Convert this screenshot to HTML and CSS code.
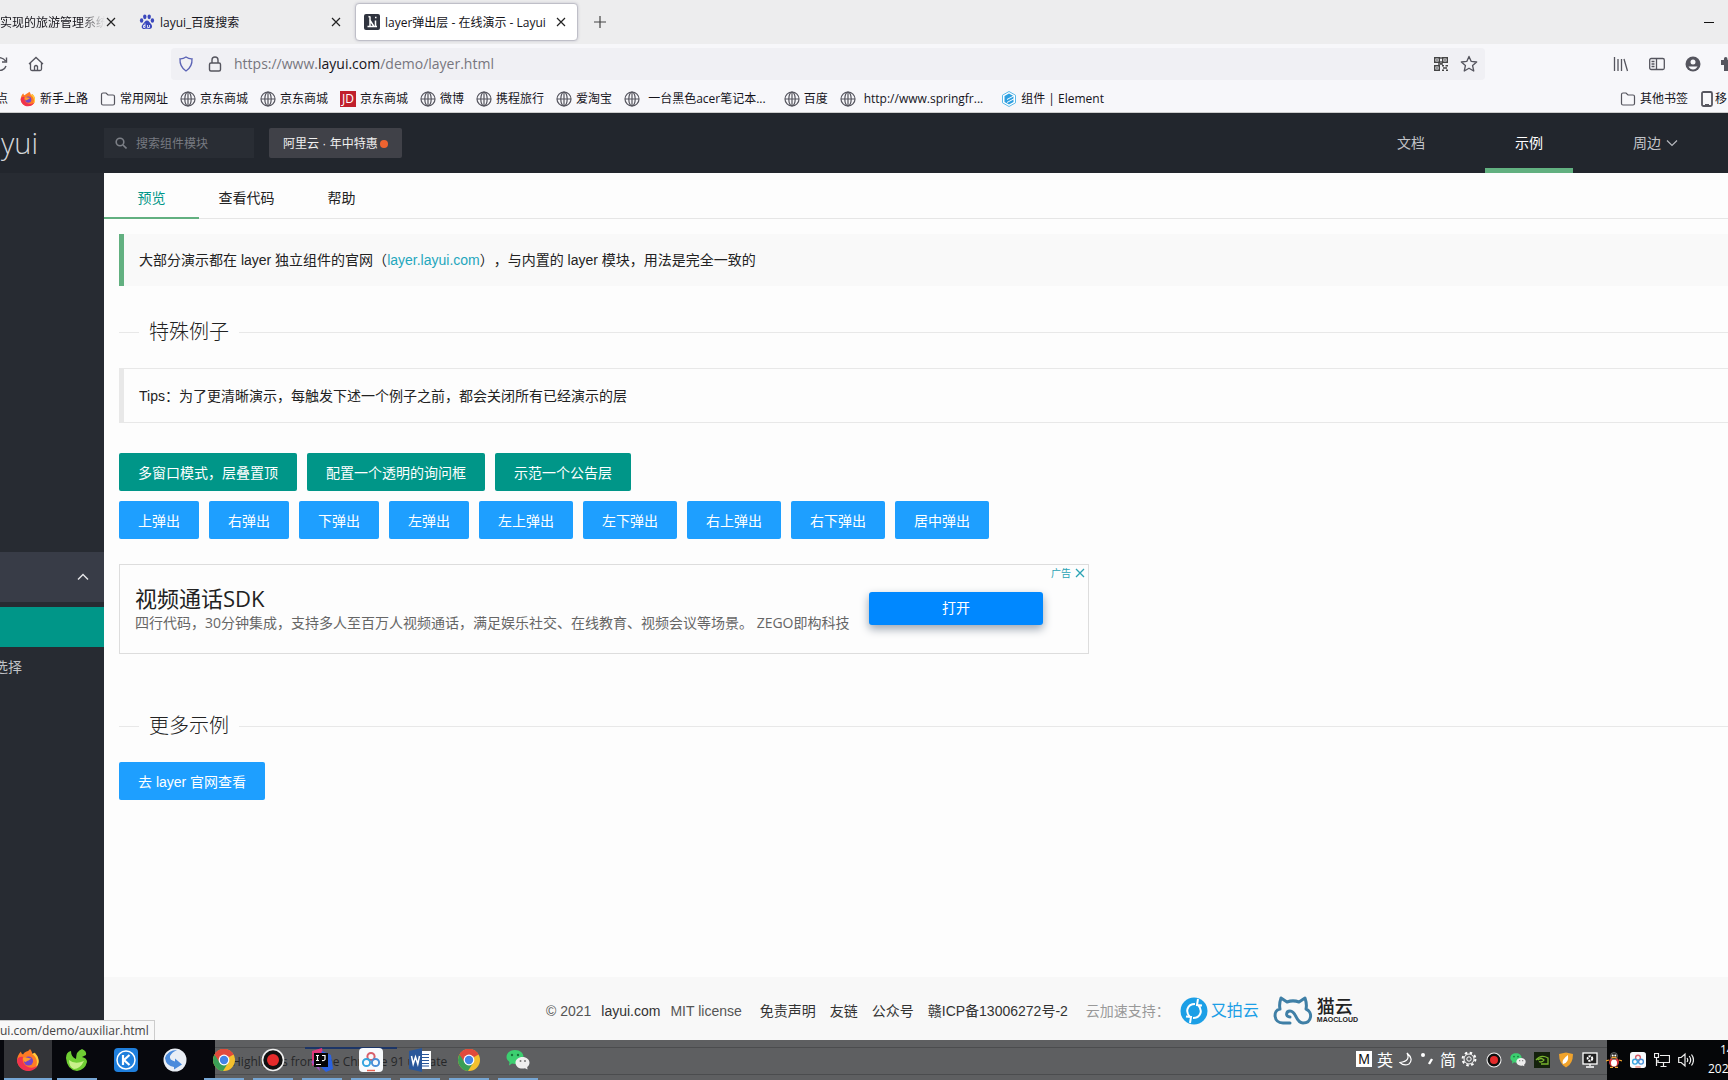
FILE: index.html
```html
<!DOCTYPE html>
<html lang="zh-CN">
<head>
<meta charset="utf-8">
<title>layer弹出层 - 在线演示 - Layui</title>
<link rel="stylesheet" href="styles.css">
</head>
<body>
<svg class="defs" aria-hidden="true">
  <symbol id="globe" viewBox="0 0 16 16"><g fill="none" stroke="#55555e" stroke-width="1.2"><circle cx="8" cy="8" r="7"/><ellipse cx="8" cy="8" rx="3.2" ry="7"/><path d="M1 8h14M8 1v14"/></g></symbol>
  <symbol id="folder" viewBox="0 0 16 16"><path d="M1.5 12.500V3.500q0-1.500 1.500-1.500h3l2 2h5q1.500 0 1.500 1.500v7q0 1.500-1.500 1.500h-10q-1.500 0-1.500-1.500z" fill="none" stroke="#55555e" stroke-width="1.200"/></symbol>
  <symbol id="close" viewBox="0 0 10 10"><path d="M1 1l8 8M9 1l-8 8" stroke="#222" stroke-width="1.200"/></symbol>
  <symbol id="firefox" viewBox="0 0 24 24"><path d="M14 1c2 2 2 4 2.500 5 1.500-.5 2-1.500 2-1.500 3 3 4.500 5.500 4 10A11 11 0 0 1 1 13C1 9 2.500 6 5 3.500 5 5 6 6 7 6.500 9 3 12 4 14 1z" fill="#ff7b24"/><path d="M16 6c6 4 6 10 3 14 3-1 4-6 3.500-8-.5-4-3-6-4-7z" fill="#ffcf3d"/><path d="M1 13c1 6 6 10 11 10 4 0 8-2 10-6-4 4-10 3-13 0-2-2-3-5-2-8-3-1-6 1-6 4z" fill="#f0324f"/><circle cx="12.500" cy="13" r="4.600" fill="#7545c8"/><path d="M7 10c3-2 5 1 8 0-1 3-4 2-5 4-2 0-3-2-3-4z" fill="#ff9a2b"/></symbol>
  <symbol id="chrome" viewBox="0 0 24 24"><circle cx="12" cy="12" r="11" fill="#f4c02e"/><path d="M12 12L2.500 6.500A11 11 0 0 1 21.500 6.500z" fill="#e04a3c"/><path d="M12 12L2.500 6.500A11 11 0 0 0 11 23l5-8z" fill="#3a9e56"/><path d="M12 7h9.700A11 11 0 0 0 12 1 11 11 0 0 0 2.500 6.500L7.500 14z" fill="#e04a3c"/><circle cx="12" cy="12" r="5.400" fill="#fff"/><circle cx="12" cy="12" r="4.200" fill="#4384e6"/></symbol>
  <symbol id="wechat" viewBox="0 0 24 24"><path d="M9 2c5 0 8.500 3 8.500 7s-3.500 7-8.500 7l-3-.5L3 17.500 3.500 14C1.500 12.500.5 11 .5 9c0-4 3.500-7 8.500-7z" fill="#3ccf70"/><circle cx="6" cy="7" r="1.200" fill="#17743a"/><circle cx="12" cy="7" r="1.200" fill="#17743a"/><path d="M16.500 9c4 0 7 2.500 7 5.700 0 1.800-1 3.300-2.300 4.300l.3 2.500-2.500-1.300c-5 1.500-9.500-1.500-9.500-5.500 0-3.200 3-5.700 7-5.700z" fill="#eee"/><circle cx="14.500" cy="13" r="1" fill="#777"/><circle cx="19" cy="13" r="1" fill="#777"/></symbol>
  <symbol id="record" viewBox="0 0 24 24"><circle cx="12" cy="12" r="10.500" fill="#111" stroke="#eee" stroke-width="1.600"/><circle cx="12" cy="12" r="6" fill="#e52b2b"/></symbol>
  <symbol id="pan" viewBox="0 0 24 24"><rect width="24" height="24" rx="4" fill="#f7fafd"/><g fill="none" stroke-width="2"><circle cx="12" cy="8.500" r="3.600" stroke="#d8606c"/><circle cx="7.500" cy="14.500" r="3.600" stroke="#35a5e0"/><circle cx="16.500" cy="14.500" r="3.600" stroke="#4a90d8"/></g><path d="M8 22.500h8" stroke="#e86050" stroke-width="1.500"/></symbol>
</svg>

<div class="browser">
  <div class="tabstrip">
    <div class="tab tab-first"><span class="tab-title tab-fade">实现的旅游管理系统</span><button class="icon-btn" aria-label="关闭标签页"><svg width="10" height="10"><use href="#close"/></svg></button></div>
    <div class="tab tab-second">
      <svg width="16" height="16" viewBox="0 0 16 16" fill="#3b48bd"><ellipse cx="2.600" cy="6.500" rx="1.700" ry="2.200"/><ellipse cx="5.800" cy="2.800" rx="1.700" ry="2.400"/><ellipse cx="10.200" cy="2.800" rx="1.700" ry="2.400"/><ellipse cx="13.400" cy="6.500" rx="1.700" ry="2.200"/><path d="M8 6.500c2 0 2.500 2 4 3.500 2 2 1 5-1.500 5-1.500 0-3.500-.3-5 0C3 15.500 1.500 12.500 4 10c1.500-1.500 2-3.500 4-3.500z"/><path d="M6 9.500v4M6 11.500h-1.500v2H6M8.500 11v2.500H10.500V11" stroke="#fff" fill="none" stroke-width=".8"/></svg>
      <span class="tab-title">layui_百度搜索</span><button class="icon-btn" aria-label="关闭标签页"><svg width="10" height="10"><use href="#close"/></svg></button></div>
    <div class="tab tab-active">
      <svg width="16" height="16" viewBox="0 0 16 16"><rect width="16" height="16" rx="2" fill="#30343f"/><path d="M4.500 2.500L6 3v9.500H3.500M5.500 5.500l4.500 7H5M11.500 6.500v6h1.500" stroke="#fff" stroke-width="1.500" fill="none"/><path d="M11 3.500h1.500" stroke="#fff" stroke-width="1.500"/></svg>
      <span class="tab-title">layer弹出层 - 在线演示 - Layui</span><button class="icon-btn" aria-label="关闭标签页"><svg width="10" height="10"><use href="#close"/></svg></button></div>
    <button class="icon-btn new-tab" aria-label="新标签页"><svg width="12" height="12" viewBox="0 0 12 12"><path d="M6 0v12M0 6h12" stroke="#444" stroke-width="1.200"/></svg></button>
    <button class="icon-btn minimize" aria-label="最小化"><svg width="10" height="10" viewBox="0 0 10 10"><path d="M0 5.500h10" stroke="#111"/></svg></button>
  </div>

  <div class="toolbar">
    <div class="nav-left">
      <button class="icon-btn reload" aria-label="刷新"><svg width="16" height="16" viewBox="0 0 16 16" fill="none" stroke="#55555e" stroke-width="1.400"><path d="M13.500 5A6.300 6.300 0 1 0 14 10M14.500 1.500v4.500H10"/></svg></button>
      <button class="icon-btn" aria-label="主页"><svg width="16" height="16" viewBox="0 0 16 16" fill="none" stroke="#55555e" stroke-width="1.300"><path d="M1 8l7-6.500L15 8M2.500 7v6q0 1.500 1.500 1.500h8q1.500 0 1.500-1.500V7M6.500 14v-3.500q1.500-2 3 0V14"/></svg></button>
    </div>
    <div class="urlbar">
      <svg width="16" height="16" viewBox="0 0 16 16"><path d="M8 1q3 2 6 1.800.5 8-6 12.200Q1.500 10.800 2 2.800 5 3 8 1z" fill="none" stroke="#5a62b5" stroke-width="1.300"/></svg>
      <svg width="16" height="16" viewBox="0 0 16 16" fill="none" stroke="#55555e" stroke-width="1.400"><rect x="2.500" y="7" width="11" height="8" rx="1.500"/><path d="M5 7V4q0-3 3-3t3 3v3"/></svg>
      <span class="url">https://www.<b>layui.com</b>/demo/layer.html</span>
      <svg width="16" height="16" viewBox="0 0 16 16" fill="none" stroke="#444" stroke-width="1.400"><path d="M1.700 1.700h4.600v4.600H1.700zM9.700 1.700h4.600v4.600H9.700zM1.700 9.700h4.600v4.600H1.700z"/><path d="M3.300 4h1.400M11.300 4h1.400M3.300 12h1.400M9 9.700h2M12.500 9.700H15M10 12h4M9 14.300h2M13 14.300h2M8 1v2M8 5v3H5M8 8h2"/></svg>
      <svg width="18" height="18" viewBox="0 0 16 16"><path d="M8 1.300l2 4.400 4.800.5-3.600 3.200 1 4.800L8 11.800l-4.200 2.400 1-4.800L1.200 6.200 6 5.700z" fill="none" stroke="#55555e" stroke-width="1.200" stroke-linejoin="round"/></svg>
    </div>
    <div class="nav-right">
      <svg width="16" height="16" viewBox="0 0 16 16" stroke="#55555e" stroke-width="1.300"><path d="M1.500 1v14M5 3v12M8.500 3v12M11 3l3.500 12"/></svg>
      <svg width="16" height="16" viewBox="0 0 16 16" fill="none" stroke="#55555e" stroke-width="1.300"><rect x=".7" y="2.500" width="14.600" height="11" rx="1.500"/><path d="M7.500 2.500v11M2.500 5.500h3M2.500 8h3M2.500 10.500h3"/></svg>
      <svg width="16" height="16" viewBox="0 0 16 16"><circle cx="8" cy="8" r="7.500" fill="#55555e"/><circle cx="8" cy="6" r="2.500" fill="#f9f9fb"/><path d="M3.500 10.500h9q-1.500 3-4.500 3t-4.500-3z" fill="#f9f9fb"/></svg>
      <svg width="16" height="16" viewBox="0 0 16 16"><path d="M0 4h3q-.5-3 1.700-3T6.500 4H12v11H3V9H0z" fill="#55555e"/></svg>
    </div>
  </div>

  <div class="bookmarks">
    <a class="bm bm-cut" href="#">点</a>
    <a class="bm" href="#"><svg width="16" height="16"><use href="#firefox"/></svg>新手上路</a>
    <a class="bm" href="#"><svg width="16" height="16"><use href="#folder"/></svg>常用网址</a>
    <a class="bm" href="#"><svg width="16" height="16"><use href="#globe"/></svg>京东商城</a>
    <a class="bm" href="#"><svg width="16" height="16"><use href="#globe"/></svg>京东商城</a>
    <a class="bm" href="#"><span class="jd">JD</span>京东商城</a>
    <a class="bm" href="#"><svg width="16" height="16"><use href="#globe"/></svg>微博</a>
    <a class="bm" href="#"><svg width="16" height="16"><use href="#globe"/></svg>携程旅行</a>
    <a class="bm" href="#"><svg width="16" height="16"><use href="#globe"/></svg>爱淘宝</a>
    <a class="bm bm-wide" href="#"><svg width="16" height="16"><use href="#globe"/></svg>一台黑色acer笔记本...</a>
    <a class="bm" href="#"><svg width="16" height="16"><use href="#globe"/></svg>百度</a>
    <a class="bm bm-wide" href="#"><svg width="16" height="16"><use href="#globe"/></svg>http://www.springfr...</a>
    <a class="bm" href="#"><svg width="16" height="16" viewBox="0 0 16 16"><path d="M8 .5l6.500 3.700v7.600L8 15.500l-6.500-3.700V4.200z" fill="#fff" stroke="#5bb8e8"/><path d="M8 2.500l4.500 2.600v6L8 13.500l-4.500-2.400v-6z" fill="#2e9fe0"/><path d="M6 8.500l7-3.700M6 11.500l7-3.700" stroke="#fff"/></svg>组件 | Element</a>
    <div class="bm-end">
      <a class="bm" href="#"><svg width="16" height="16"><use href="#folder"/></svg>其他书签</a>
      <a class="bm bm-phone" href="#"><svg width="12" height="16" viewBox="0 0 12 16"><rect x="1" y="1" width="10" height="14" rx="1.500" fill="none" stroke="#55555e" stroke-width="1.800"/><path d="M4 13.500h4" stroke="#55555e"/></svg>移</a>
    </div>
  </div>
</div>

<header class="header">
  <a class="logo" href="#">layui</a>
  <label class="search">
    <svg width="12" height="12" viewBox="0 0 12 12" fill="none" stroke="#7d8087" stroke-width="1.600"><circle cx="5" cy="5" r="3.800"/><path d="M8 8l3.500 3.500"/></svg>
    <input type="text" placeholder="搜索组件模块" aria-label="搜索组件模块">
  </label>
  <a class="promo" href="#">阿里云 · 年中特惠<i class="dot"></i></a>
  <nav class="topnav">
    <a href="#">文档</a>
    <a class="current" href="#">示例</a>
    <a href="#">周边<svg width="12" height="8" viewBox="0 0 12 8"><path d="M1 1.500l5 5 5-5" fill="none" stroke="#b6b8bd" stroke-width="1.200"/></svg></a>
  </nav>
</header>

<div class="page">
  <aside class="side">
    <button class="side-group" aria-label="收起"><svg width="12" height="8" viewBox="0 0 12 8"><path d="M1 6.500l5-5 5 5" fill="none" stroke="#e6e7ea" stroke-width="1.400"/></svg></button>
    <a class="side-item side-current" href="#" aria-label="弹出层"></a>
    <a class="side-item" href="#"><span>选择</span></a>
  </aside>

  <main class="main">
    <div class="tabs">
      <button class="on">预览</button><button>查看代码</button><button>帮助</button>
    </div>
    <div class="content">
      <blockquote class="quote">大部分演示都在 layer 独立组件的官网（<a href="#">layer.layui.com</a>），与内置的 layer 模块，用法是完全一致的</blockquote>
      <fieldset class="title"><legend>特殊例子</legend></fieldset>
      <blockquote class="quote quote-plain">Tips：为了更清晰演示，每触发下述一个例子之前，都会关闭所有已经演示的层</blockquote>
      <div class="demos">
        <div class="row">
          <button class="btn">多窗口模式，层叠置顶</button>
          <button class="btn">配置一个透明的询问框</button>
          <button class="btn">示范一个公告层</button>
        </div>
        <div class="row">
          <button class="btn blue">上弹出</button>
          <button class="btn blue">右弹出</button>
          <button class="btn blue">下弹出</button>
          <button class="btn blue">左弹出</button>
          <button class="btn blue">左上弹出</button>
          <button class="btn blue">左下弹出</button>
          <button class="btn blue">右上弹出</button>
          <button class="btn blue">右下弹出</button>
          <button class="btn blue">居中弹出</button>
        </div>
      </div>
      <section class="ad">
        <div class="ad-text">
          <h3>视频通话SDK</h3>
          <p>四行代码，30分钟集成，支持多人至百万人视频通话，满足娱乐社交、在线教育、视频会议等场景。 ZEGO即构科技</p>
        </div>
        <button class="ad-open">打开</button>
        <span class="ad-mark">广告<svg width="10" height="10" viewBox="0 0 10 10"><path d="M1 1l8 8M9 1l-8 8" stroke="#2ba3b4" stroke-width="1.300"/></svg></span>
      </section>
      <fieldset class="title title-more"><legend>更多示例</legend></fieldset>
      <a class="btn blue" href="#">去 layer 官网查看</a>
    </div>
    <footer class="footer">
      <span>© 2021</span><a class="strong" href="#">layui.com</a><span>MIT license</span>
      <div class="links"><a href="#">免责声明</a><a href="#">友链</a><a href="#">公众号</a><a href="#">赣ICP备13006272号-2</a></div>
      <span class="muted">云加速支持：</span>
      <a class="sponsor upyun" href="#"><svg width="28" height="28" viewBox="0 0 28 28"><circle cx="14" cy="14" r="13.500" fill="#1c9fe6"/><path d="M15 7C7 7 5 15 10 20M10 26l1-6-5-.5M13 21c8 0 10-8 5-13M18 2l-1 6 5 .5" fill="none" stroke="#fff" stroke-width="2"/></svg>又拍云</a>
      <a class="sponsor mao" href="#"><svg width="40" height="30" viewBox="0 0 40 30"><path d="M17 27H10C0 27 0 14 7 13 6 9 7 5 8 2l6 4c4-1.500 8-1.500 12 0l6-4c1 3 2 7 1 11 7 3 6 14-3 14-8 0-6-12-13-12-4 0-5 6 0 6" fill="none" stroke="#3f7fa6" stroke-width="3" stroke-linecap="round" stroke-linejoin="round"/></svg><span><b>猫云</b><small>MAOCLOUD</small></span></a>
    </footer>
  </main>
  <div class="status">ui.com/demo/auxiliar.html</div>
</div>

<div class="taskbar">
  <div class="ghost"><i></i><span>Highlights from the Chrome 91 update</span></div>
  <div class="apps">
    <button class="app open active" aria-label="Firefox"><svg width="24" height="24"><use href="#firefox"/></svg></button>
    <button class="app open" aria-label="叶子"><svg width="24" height="24" viewBox="0 0 24 24"><path d="M1 10q0-6 5-7 0 6 5 8 0-8 6-10 5 2 4 6l-4 2q5 1 5 5-2 8-10 9Q2 22 1 10z" fill="#6fce33"/><path d="M4 12q6 5 15 1-4 8-10 8-5-2-5-9z" fill="#c9f08c"/></svg></button>
    <button class="app" aria-label="K"><svg width="24" height="24" viewBox="0 0 24 24"><rect width="24" height="24" rx="4" fill="#1f7fdc"/><circle cx="12" cy="12" r="9" fill="none" stroke="#fff" stroke-width="1.500"/><path d="M9 7v10M15.500 7L10 12l5.500 5" fill="none" stroke="#fff" stroke-width="2.200"/></svg></button>
    <button class="app" aria-label="飞鸟"><svg width="24" height="24" viewBox="0 0 24 24"><circle cx="12" cy="12" r="11.500" fill="#e9eef5"/><path d="M14 2Q5 2 2 10q1 8 9 9l0 2.500 8-5-7-6v3Q6 12 7 8q2-4 7-6z" fill="#4a8bdc"/></svg></button>
    <button class="app open" aria-label="Chrome"><svg width="24" height="24"><use href="#chrome"/></svg></button>
    <button class="app open" aria-label="录屏"><svg width="24" height="24"><use href="#record"/></svg></button>
    <button class="app open" aria-label="IntelliJ IDEA"><svg width="24" height="24" viewBox="0 0 24 24"><path d="M2 3l10-3 2 12-12 6z" fill="#e0387a"/><path d="M12 3l9 4 2 14-7 3-8-8z" fill="#2b62e0"/><path d="M1 14l6-4 3 13z" fill="#a052c8"/><rect x="4" y="5" width="14" height="14" fill="#050505"/><path d="M6 7.500h3M7.500 7.500v5M6 12.500h3M12 7.500h3v4q-1 1.500-3 1M6 16.500h5" stroke="#fff" stroke-width="1.200" fill="none"/></svg></button>
    <button class="app open" aria-label="网盘"><svg width="24" height="24"><use href="#pan"/></svg></button>
    <button class="app open" aria-label="Word"><svg width="24" height="24" viewBox="0 0 24 24"><rect x="11" y="3" width="12" height="18" fill="#fff"/><path d="M14 6.500h7M14 9.500h7M14 12.500h7M14 15.500h7M14 18h7" stroke="#2a579a"/><path d="M1 3l13-3v24L1 21z" fill="#2a579a"/><path d="M3.500 8l1.700 8L7.500 9l2.300 7 1.700-8" fill="none" stroke="#fff" stroke-width="1.500"/></svg></button>
    <button class="app open" aria-label="Chrome"><svg width="24" height="24"><use href="#chrome"/></svg></button>
    <button class="app open" aria-label="微信"><svg width="24" height="24"><use href="#wechat"/></svg></button>
  </div>
  <div class="ime">
    <span class="ime-m">M</span><span>英</span>
    <svg width="16" height="16" viewBox="0 0 16 16"><path d="M9 2q4 8-7 9.500 4 4 9 1.500 5-5-2-11z" fill="none" stroke="#fff" stroke-width="1.200"/></svg>
    <svg width="16" height="16" viewBox="0 0 16 16"><circle cx="4" cy="4" r="2" fill="#fff"/><path d="M13 8l-3 5" stroke="#fff" stroke-width="2.400"/></svg>
    <span>简</span>
    <svg width="16" height="16" viewBox="0 0 16 16" fill="none" stroke="#fff"><circle cx="8" cy="8" r="2.200"/><circle cx="8" cy="8" r="5"/><circle cx="8" cy="8" r="6.400" stroke-width="2" stroke-dasharray="2.500 2.520"/></svg>
  </div>
  <div class="tray">
    <svg width="16" height="16"><use href="#record"/></svg>
    <svg width="16" height="16"><use href="#wechat"/></svg>
    <svg width="16" height="16" viewBox="0 0 16 16"><rect width="16" height="16" fill="#14210c"/><path d="M2 8q5-6 12-2v6H7M4 8q3-3 6 0-2 3-5 1.500" fill="none" stroke="#78b52c" stroke-width="1.300"/></svg>
    <svg width="16" height="16" viewBox="0 0 16 16"><path d="M1 2l7-1.500L15 2q0 10-7 13.500Q1 12 1 2z" fill="#f0a32c"/><path d="M10 3q-7 5-5 9 6-1 5-9z" fill="#fff"/></svg>
    <svg width="16" height="16" viewBox="0 0 16 16"><rect x="1" y="1" width="14" height="11" fill="#222" stroke="#fff" stroke-width="1.300"/><circle cx="8" cy="6.500" r="2.300" fill="none" stroke="#fff" stroke-width="2" stroke-dasharray="2 .8"/><path d="M8 12v2M4 15h8" stroke="#fff" stroke-width="1.300"/></svg>
    <svg width="16" height="16" viewBox="0 0 16 16"><ellipse cx="8" cy="10" rx="5" ry="5" fill="#d4343a"/><ellipse cx="8" cy="11" rx="3" ry="3.500" fill="#fff"/><circle cx="8" cy="4" r="3.500" fill="#222" stroke="#aaa" stroke-width=".5"/><circle cx="6.700" cy="3.500" r="1" fill="#fff"/><circle cx="9.300" cy="3.500" r="1" fill="#fff"/><path d="M5.500 5.500h5M4 15.500h3M9 15.500h3M0 9l3-1M13 8l3 1" stroke="#f0a32c" stroke-width="1.300"/></svg>
    <svg width="16" height="16"><use href="#pan"/></svg>
    <svg width="16" height="16" viewBox="0 0 16 16" fill="none" stroke="#eee" stroke-width="1.200"><path d="M6 3.500h9.500v7H4V8M9.500 10.500v4M6.500 14.500h6M.5 1.500h4v4h-4zM2.500 5.500V14"/></svg>
    <svg width="16" height="16" viewBox="0 0 16 16" fill="none" stroke="#eee" stroke-width="1.200"><path d="M.7 5.500h2.500L7 2v12L3.200 10.500H.7zM9 6q1.500 2 0 4M11.200 4q3 4 0 8M13.500 2.500q4 5.500 0 11"/></svg>
  </div>
  <div class="clock"><span class="time">14</span><span>202</span></div>
</div>
</body>
</html>
```

FILE: styles.css
```css
* { box-sizing: border-box; }
body {
  margin: 0;
  height: 100vh;
  display: flex;
  flex-direction: column;
  overflow: hidden;
  font: 14px/22px "Liberation Sans", "Noto Sans CJK SC", sans-serif;
  color: #222;
  background: #fdfdfd;
}
a { color: inherit; text-decoration: none; }
button { font: inherit; color: inherit; border: 0; padding: 0; background: none; }
svg { flex: none; display: block; }
.defs { position: absolute; width: 0; height: 0; }

/* Browser window */
.browser { flex: none; font: 12px/16px "Open Sans", "Noto Sans CJK SC", sans-serif; color: #15141a; background: #f7f7fa; border-bottom: 1px solid #ccc; }
.icon-btn { display: flex; align-items: center; justify-content: center; }
.tabstrip { height: 44px; padding: 3px 14px 3px 0; display: flex; align-items: center; background: #ededee; white-space: nowrap; }
.tab { height: 38px; display: flex; align-items: center; }
.tab-title { flex: 1; padding-top: 2px; overflow: hidden; }
.tab-first { width: 116px; }
.tab-fade { -webkit-mask-image: linear-gradient(to right, #000 80px, transparent 105px); mask-image: linear-gradient(to right, #000 80px, transparent 105px); }
.tab-second { width: 239px; padding: 0 14px 0 23px; gap: 5px; }
.tab-active { width: 223px; padding: 0 11px 0 8px; gap: 5px; background: #fff; border: 1px solid #bfbfc8; border-radius: 4px; box-shadow: 0 0 3px #c4c4cc; }
.new-tab { margin-left: 16px; }
.minimize { margin-left: auto; }
.toolbar { height: 38px; padding: 4px 0 2px; display: flex; }
.nav-left { width: 171px; display: flex; align-items: center; gap: 20px; overflow: hidden; }
.reload { margin-left: -8px; }
.urlbar { flex: 1; padding: 0 7px; display: flex; align-items: center; gap: 11px; background: #f0f0f4; border-radius: 4px; }
.urlbar svg:first-child { margin-right: 2px; }
.url { flex: 1; font-size: 14px; line-height: 20px; color: #77767e; }
.url b { font-weight: 400; color: #15141a; }
.nav-right { width: 243px; padding-left: 128px; display: flex; align-items: center; gap: 20px; overflow: hidden; }
.bookmarks { height: 30px; padding-top: 3px; display: flex; align-items: center; gap: 12px; white-space: nowrap; overflow: hidden; }
.bm { flex: none; display: flex; align-items: center; gap: 4px; }
.bm-cut { width: 8px; justify-content: flex-end; }
.bm-wide { gap: 8px; margin-right: 6px; }
.jd { width: 16px; height: 16px; background: #c0202c; color: #fff; text-align: center; }
.bm-end { width: 108px; flex: none; margin-left: auto; display: flex; gap: 13px; overflow: hidden; }
.bm-phone { gap: 2px; }

/* Site header */
.header { flex: none; height: 60px; display: flex; align-items: center; background: #22262d; color: #c2c4c8; overflow: hidden; }
.logo { width: 104px; padding-right: 66px; display: flex; justify-content: flex-end; font: 300 29px/36px "Open Sans", sans-serif; color: #d5d7da; }
.search { width: 150px; height: 30px; padding: 0 11px; display: flex; align-items: center; gap: 9px; background: #292d34; }
.search input { min-width: 0; flex: 1; padding: 0; border: 0; background: none; font: 12px/20px "Noto Sans CJK SC", sans-serif; color: #ccc; }
.search input::placeholder { color: #777a81; }
.promo { height: 30px; margin-left: 15px; padding: 2px 14px 0; display: flex; align-items: center; gap: 2px; font-size: 12px; background: #404148; color: #f0f0f0; border-radius: 2px; }
.dot { width: 8px; height: 8px; border-radius: 50%; background: #ee6330; }
.topnav { margin-left: auto; padding-right: 20px; height: 60px; display: flex; gap: 30px; }
.topnav a { padding: 0 30px; display: flex; align-items: center; gap: 5px; border-bottom: 5px solid transparent; border-top: 5px solid transparent; }
.topnav .current { color: #fff; border-bottom-color: #62b080; }

/* Page body */
.page { flex: 1; min-height: 0; display: flex; position: relative; }
.side { width: 104px; flex: none; padding-top: 379px; background: #272b32; overflow: hidden; }
.side-group { width: 100%; height: 50px; margin-bottom: 5px; padding-right: 15px; display: flex; align-items: center; justify-content: flex-end; background: #383c47; }
.side-item { width: 22px; height: 40px; display: flex; align-items: center; justify-content: flex-end; color: #bfc1c5; white-space: nowrap; }
.side-current { width: 100%; background: #009688; }
.main { flex: 1; min-width: 0; display: flex; flex-direction: column; }
.tabs { height: 46px; display: flex; border-bottom: 1px solid #e6e6e6; }
.tabs button { width: 95px; height: 46px; padding-top: 6px; border-bottom: 2px solid transparent; }
.tabs .on { color: #009688; border-bottom-color: #62b080; }
.content { flex: 1; padding: 15px 0 0 15px; }
.quote { margin: 0; padding: 15px; border-left: 5px solid #62b080; background: #f9f9f9; text-spacing-trim: space-all; }
.quote a { color: #1fa7bd; }
.quote-plain { padding-top: 16px; border: 1px solid #e8e8e8; border-left-width: 5px; border-right: 0; background: none; }
.title { margin: 30px 0 20px; padding: 0; border: 0; border-top: 1px solid #e8e8e8; }
.title legend { margin-left: 20px; padding: 0 10px; font-size: 20px; font-weight: 300; line-height: 32px; }
.demos { margin: 30px 0 25px; display: grid; gap: 10px; }
.row { display: flex; gap: 10px; }
.btn { display: inline-block; height: 38px; padding: 2px 19px 0; line-height: 36px; color: #fff; background: #009688; border-radius: 2px; }
.blue { background: #1e9fff; }
.ad { width: 970px; height: 90px; padding: 0 45px 0 15px; display: flex; align-items: center; justify-content: space-between; border: 1px solid #ddd; position: relative; font-family: "Open Sans", "Noto Sans CJK SC", sans-serif; }
.ad h3 { margin: 0; font-size: 22px; font-weight: 400; line-height: 28px; }
.ad p { margin: 0; color: #666; line-height: 22px; white-space: nowrap; }
.ad-open { width: 174px; height: 33px; margin-bottom: 2px; color: #fff; background: #0088ff; border-radius: 3px; box-shadow: 0 4px 10px #9aa4b0; }
.ad-mark { position: absolute; top: 0; right: 3px; display: flex; align-items: center; gap: 4px; font-size: 10px; line-height: 16px; color: #2ba3b4; }
.title-more { margin: 56px 0 20px; }
.footer { height: 63px; padding: 4px 0 0 72px; display: flex; align-items: center; justify-content: center; gap: 10px; background: #f8f8f8; color: #555; white-space: nowrap; }
.footer .strong, .links { color: #333; }
.links { margin: 0 8px; display: flex; gap: 14px; }
.footer .muted { color: #999; }
.sponsor { display: flex; align-items: center; gap: 3px; }
.upyun { font-size: 16px; color: #1c9fe6; }
.mao { margin-left: 4px; gap: 4px; color: #222; }
.mao span { display: grid; }
.mao b { font-size: 18px; line-height: 18px; font-weight: 500; }
.mao small { font: 700 7px/8px "Liberation Sans", sans-serif; }
.status { position: absolute; left: 0; bottom: 0; height: 20px; padding: 0 5px 0 0; font: 12px/19px "Open Sans", sans-serif; color: #444; background: #f8f8f8; border: 1px solid #ccc; border-width: 1px 1px 0 0; }

/* Taskbar */
.taskbar { flex: none; height: 40px; display: flex; position: relative; color: #fff; overflow: hidden; background: linear-gradient(to right, #07080d 215px, #5e5f61 215px, #5e5f61 calc(100% - 121px), #050608 calc(100% - 121px)); }
.ghost { position: absolute; left: 215px; right: 121px; top: 7px; height: 28px; border: 1px solid #4b4c4e; border-width: 1px 0; padding-left: 17px; font: 12px/28px "Open Sans", sans-serif; color: #262729; }
.ghost i { position: absolute; left: 90px; top: -1px; width: 92px; height: 2px; background: #1c3566; }
.apps { padding-left: 8px; display: flex; gap: 9px; position: relative; }
.app { width: 40px; display: flex; align-items: center; justify-content: center; border-bottom: 2px solid transparent; border-top: 2px solid transparent; }
.open { border-bottom-color: #76a6d4; background-clip: padding-box; }
.active { width: 48px; margin: 0 -4px; background: #333438; }
.ime, .tray { display: flex; align-items: center; position: relative; }
.ime { margin-left: auto; gap: 5px; padding-right: 9px; padding-bottom: 3px; font: 16px/20px "Noto Sans CJK SC", sans-serif; }
.ime-m { width: 16px; height: 16px; background: #fff; color: #111; font: 14px/16px "Liberation Sans", sans-serif; text-align: center; }
.tray { gap: 8px; padding-right: 14px; }
.clock { width: 20px; display: flex; flex-direction: column; font: 12px/19px "Open Sans", sans-serif; }
.time { padding-left: 12px; }
```
